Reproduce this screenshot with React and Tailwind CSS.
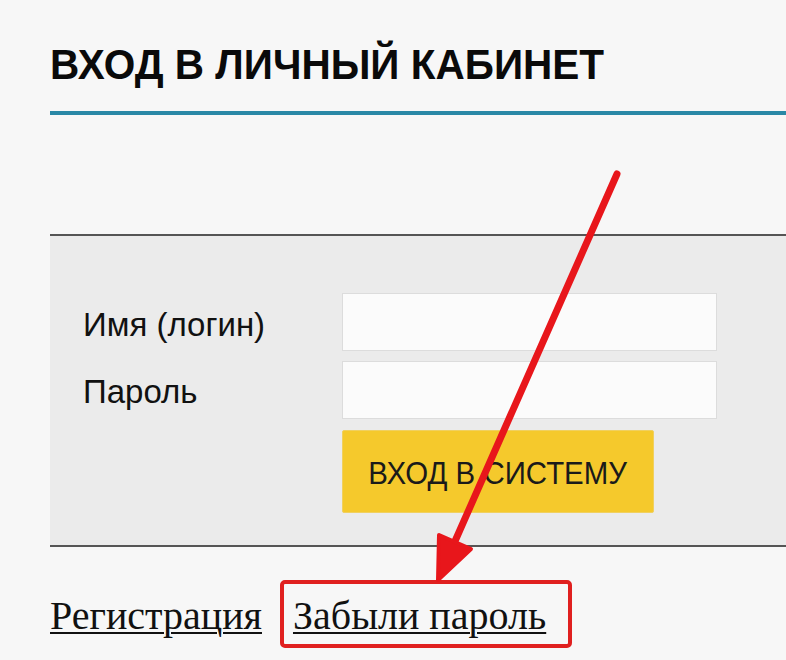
export default function App() {
  return (
    <div className="relative w-[786px] h-[660px] overflow-hidden bg-[#f7f7f7] pl-[50px]" style={{ fontFamily: '"Liberation Sans", Arial, sans-serif' }}>
      <h1 className="mt-[44px] h-[42px] text-[42px] leading-none font-bold text-[#0a0a0a] whitespace-nowrap origin-left scale-x-[0.965]">
        ВХОД В ЛИЧНЫЙ КАБИНЕТ
      </h1>
      <div className="mt-[25px] h-[4px] bg-[#2a88a6]" />

      <div className="mt-[119px] border-t-2 border-b-2 border-[#555] bg-[#ebebeb] pl-[33px] pt-[57px] pb-[32px]">
        <div className="grid grid-cols-[259px_375px] gap-y-[10px]">
          <div className="flex items-center">
            <span className="mt-[5px] text-[33px] leading-none text-[#111]">Имя (логин)</span>
          </div>
          <div className="h-[58px] bg-[#fbfbfb] border border-[#dcdcdc]" />
          <div className="flex items-center">
            <span className="mt-[2px] text-[33px] leading-none text-[#111]">Пароль</span>
          </div>
          <div className="h-[58px] bg-[#fbfbfb] border border-[#dcdcdc]" />
          <div />
          <div className="pt-[1px]">
            <button className="w-[312px] h-[83px] bg-[#f5c92c] border border-[#f0d060] rounded-[2px] flex items-center justify-center">
              <span className="inline-block text-[32px] leading-none text-[#1a1a1a] whitespace-nowrap scale-x-[0.92] mt-[3px]">
                ВХОД В СИСТЕМУ
              </span>
            </button>
          </div>
        </div>
      </div>

      <div className="mt-[33px] flex items-center" style={{ fontFamily: '"Liberation Serif", "Times New Roman", serif' }}>
        <a href="#" className="text-[40px] leading-none text-[#111] underline decoration-2 underline-offset-[3px] mt-[4px]">
          Регистрация
        </a>
        <div className="ml-[18px] w-[292px] h-[68px] border-4 border-[#e0201f] rounded-[5px] pl-[9px] flex items-center">
          <a href="#" className="text-[40px] leading-none text-[#111] underline decoration-2 underline-offset-[3px] mt-[4px] whitespace-nowrap">
            Забыли пароль
          </a>
        </div>
      </div>

      <svg className="absolute left-0 top-0 pointer-events-none" width="786" height="660" viewBox="0 0 786 660">
        <line x1="617" y1="174" x2="452" y2="548" stroke="#e8161b" strokeWidth="7" strokeLinecap="round" />
        <polygon points="439,535 471,549 438,580" fill="#e8161b" stroke="#e8161b" strokeWidth="4" strokeLinejoin="round" />
      </svg>
    </div>
  );
}
